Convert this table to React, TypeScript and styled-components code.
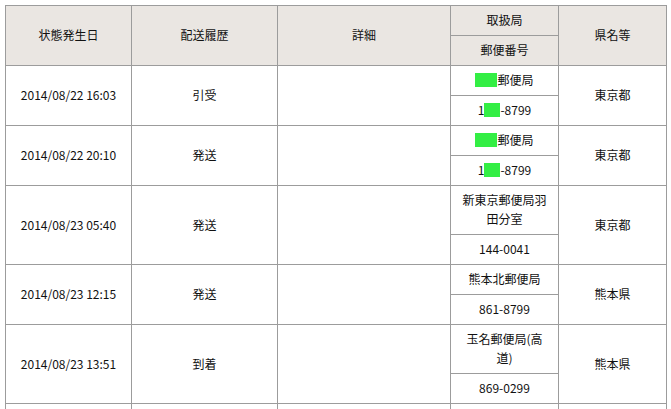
import React from "react";
import styled, { createGlobalStyle } from "styled-components";

// === THEME ===
const theme = {
  colors: {
    headBg: "#eae6e2",
    border: "#9c9c9c",
    text: "#111111",
    redact: "#33ee44",
  },
  font: '"Noto Sans CJK JP", "Noto Sans", sans-serif',
};

const GlobalStyle = createGlobalStyle`
  html, body {
    margin: 0;
    padding: 0;
    background: #ffffff;
    overflow: hidden;
  }
`;

// === DATA ===
type Piece = string | { redact: number };

interface Row {
  date: string;
  status: string;
  office: Piece[];
  zip: Piece[];
  pref: string;
}

const rows: Row[] = [
  {
    date: "2014/08/22 16:03",
    status: "引受",
    office: [{ redact: 22 }, "郵便局"],
    zip: ["1", { redact: 16 }, "-8799"],
    pref: "東京都",
  },
  {
    date: "2014/08/22 20:10",
    status: "発送",
    office: [{ redact: 22 }, "郵便局"],
    zip: ["1", { redact: 16 }, "-8799"],
    pref: "東京都",
  },
  {
    date: "2014/08/23 05:40",
    status: "発送",
    office: ["新東京郵便局羽田分室"],
    zip: ["144-0041"],
    pref: "東京都",
  },
  {
    date: "2014/08/23 12:15",
    status: "発送",
    office: ["熊本北郵便局"],
    zip: ["861-8799"],
    pref: "熊本県",
  },
  {
    date: "2014/08/23 13:51",
    status: "到着",
    office: ["玉名郵便局(高道)"],
    zip: ["869-0299"],
    pref: "熊本県",
  },
];

// === STYLED COMPONENTS ===
const Wrap = styled.div`
  padding: 5px 0 0 5px;
`;

const Table = styled.table`
  border-collapse: collapse;
  table-layout: fixed;
  width: 661px;
  font-family: ${theme.font};
  font-size: 12px;
  line-height: 19px;
  color: ${theme.colors.text};
`;

const Cell = styled.td`
  border: 1px solid ${theme.colors.border};
  padding: 4px 9px 6px;
  text-align: center;
  vertical-align: middle;
  word-break: break-all;
`;

const HeadCell = styled(Cell).attrs({ as: "th" })`
  background: ${theme.colors.headBg};
  font-weight: normal;
`;

const Redact = styled.span<{ $w: number }>`
  display: inline-block;
  width: ${(p) => p.$w}px;
  height: 14px;
  vertical-align: -2px;
  background: ${theme.colors.redact};
`;

const renderPieces = (pieces: Piece[]) =>
  pieces.map((p, i) =>
    typeof p === "string" ? (
      <React.Fragment key={i}>{p}</React.Fragment>
    ) : (
      <Redact key={i} $w={p.redact} />
    )
  );

// === COMPONENT ===
const App: React.FC = () => {
  return (
    <>
      <GlobalStyle />
      <Wrap>
        <Table>
          <colgroup>
            <col style={{ width: 126 }} />
            <col style={{ width: 146 }} />
            <col style={{ width: 173 }} />
            <col style={{ width: 108 }} />
            <col style={{ width: 108 }} />
          </colgroup>
          <thead>
            <tr>
              <HeadCell rowSpan={2}>状態発生日</HeadCell>
              <HeadCell rowSpan={2}>配送履歴</HeadCell>
              <HeadCell rowSpan={2}>詳細</HeadCell>
              <HeadCell>取扱局</HeadCell>
              <HeadCell rowSpan={2}>県名等</HeadCell>
            </tr>
            <tr>
              <HeadCell>郵便番号</HeadCell>
            </tr>
          </thead>
          <tbody>
            {rows.map((r, i) => (
              <React.Fragment key={i}>
                <tr>
                  <Cell rowSpan={2}>{r.date}</Cell>
                  <Cell rowSpan={2}>{r.status}</Cell>
                  <Cell rowSpan={2}></Cell>
                  <Cell>{renderPieces(r.office)}</Cell>
                  <Cell rowSpan={2}>{r.pref}</Cell>
                </tr>
                <tr>
                  <Cell>{renderPieces(r.zip)}</Cell>
                </tr>
              </React.Fragment>
            ))}
            {/* next row, cut off by the bottom edge */}
            <tr>
              <Cell>&nbsp;</Cell>
              <Cell>&nbsp;</Cell>
              <Cell>&nbsp;</Cell>
              <Cell>&nbsp;</Cell>
              <Cell>&nbsp;</Cell>
            </tr>
          </tbody>
        </Table>
      </Wrap>
    </>
  );
};

export default App;
